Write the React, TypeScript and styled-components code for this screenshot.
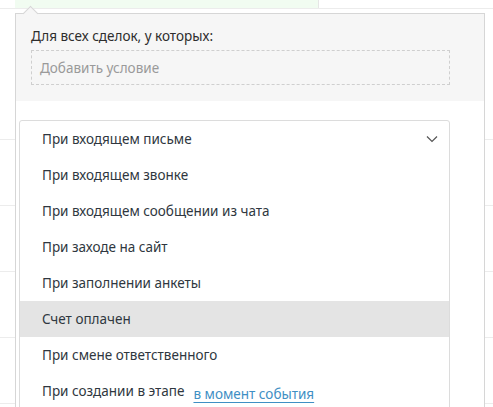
import React from "react";
import styled, { createGlobalStyle } from "styled-components";

const Global = createGlobalStyle`
  html, body { margin: 0; padding: 0; background: #fff; }
  body { font-family: "Noto Sans", "Open Sans", sans-serif; }
  * { box-sizing: border-box; }
`;

const Page = styled.div`
  position: relative;
  width: 493px;
  height: 407px;
  overflow: hidden;
  background: #fff;
`;

const TopStrip = styled.div`
  display: flex;
  height: 9px;
  border-bottom: 1px solid #ececec;
`;

const StripGap = styled.div`
  width: 15px;
`;

const GreenCell = styled.div`
  width: 304px;
  background: #f1fcf1;
  border-right: 1px solid #e6e6e6;
`;

const Rows = styled.div`
  display: flex;
  flex-direction: column;
  padding-top: 65px;
`;

const BgRow = styled.div`
  height: 66px;
  border-bottom: 1px solid #ececec;
`;

const Popover = styled.div`
  position: absolute;
  left: 15px;
  top: 13px;
  width: 470px;
  height: 420px;
  border: 1px solid #d6d6d6;
  background: #fff;
  &::before {
    content: "";
    position: absolute;
    left: 9px;
    top: -6px;
    width: 10px;
    height: 10px;
    background: #f6f6f6;
    border-left: 1px solid #d6d6d6;
    border-top: 1px solid #d6d6d6;
    transform: rotate(45deg);
  }
`;

const Header = styled.div`
  background: #f6f6f6;
  padding: 13px 34px 15px 15px;
  display: flex;
  flex-direction: column;
  gap: 5px;
  height: 87px;
`;

const Label = styled.div`
  font-size: 13.5px;
  color: #2d2d2d;
  line-height: 18px;
`;

const AddCondition = styled.div`
  height: 35px;
  border: 1px dashed #cfcfcf;
  padding: 0 8px;
  display: flex;
  align-items: center;
  font-size: 13.5px;
  color: #9a9a9a;
`;

const List = styled.ul`
  list-style: none;
  margin: 19px 0 0 3px;
  padding: 0;
  width: 431px;
  border: 1px solid #dcdcdc;
  border-radius: 3px;
  background: #fff;
`;

const Item = styled.li<{ $active?: boolean }>`
  height: 36px;
  display: flex;
  align-items: center;
  padding: 0 11px 0 22px;
  font-size: 13.5px;
  color: #2f3740;
  background: ${(p) => (p.$active ? "#e4e4e4" : "transparent")};
`;

const ItemText = styled.span`
  flex: 1;
  white-space: nowrap;
`;

const StageText = styled.span`
  white-space: nowrap;
`;

const Link = styled.a`
  margin-left: 9px;
  margin-top: 6px;
  color: #3f8fc4;
  text-decoration: underline;
  text-underline-offset: 3px;
  font-size: 13.5px;
  white-space: nowrap;
  flex: 0 0 auto;
`;

const Chevron = styled.svg`
  width: 12px;
  height: 8px;
  flex: 0 0 auto;
`;

const items = [
  "При входящем письме",
  "При входящем звонке",
  "При входящем сообщении из чата",
  "При заходе на сайт",
  "При заполнении анкеты",
  "Счет оплачен",
  "При смене ответственного",
];

export default function App() {
  return (
    <>
      <Global />
      <Page>
        <TopStrip>
          <StripGap />
          <GreenCell />
        </TopStrip>
        <Rows>
          {Array.from({ length: 6 }).map((_, i) => (
            <BgRow key={i} />
          ))}
        </Rows>
        <Popover>
          <Header>
            <Label>Для всех сделок, у которых:</Label>
            <AddCondition>Добавить условие</AddCondition>
          </Header>
          <List>
            {items.map((t, i) => (
              <Item key={t} $active={t === "Счет оплачен"}>
                <ItemText>{t}</ItemText>
                {i === 0 && (
                  <Chevron viewBox="0 0 12 8">
                    <path d="M1 1.5 L6 6.5 L11 1.5" fill="none" stroke="#555" strokeWidth="1.2" />
                  </Chevron>
                )}
              </Item>
            ))}
            <Item>
              <StageText>При создании в этапе</StageText>
              <Link>в момент события</Link>
            </Item>
          </List>
        </Popover>
      </Page>
    </>
  );
}
